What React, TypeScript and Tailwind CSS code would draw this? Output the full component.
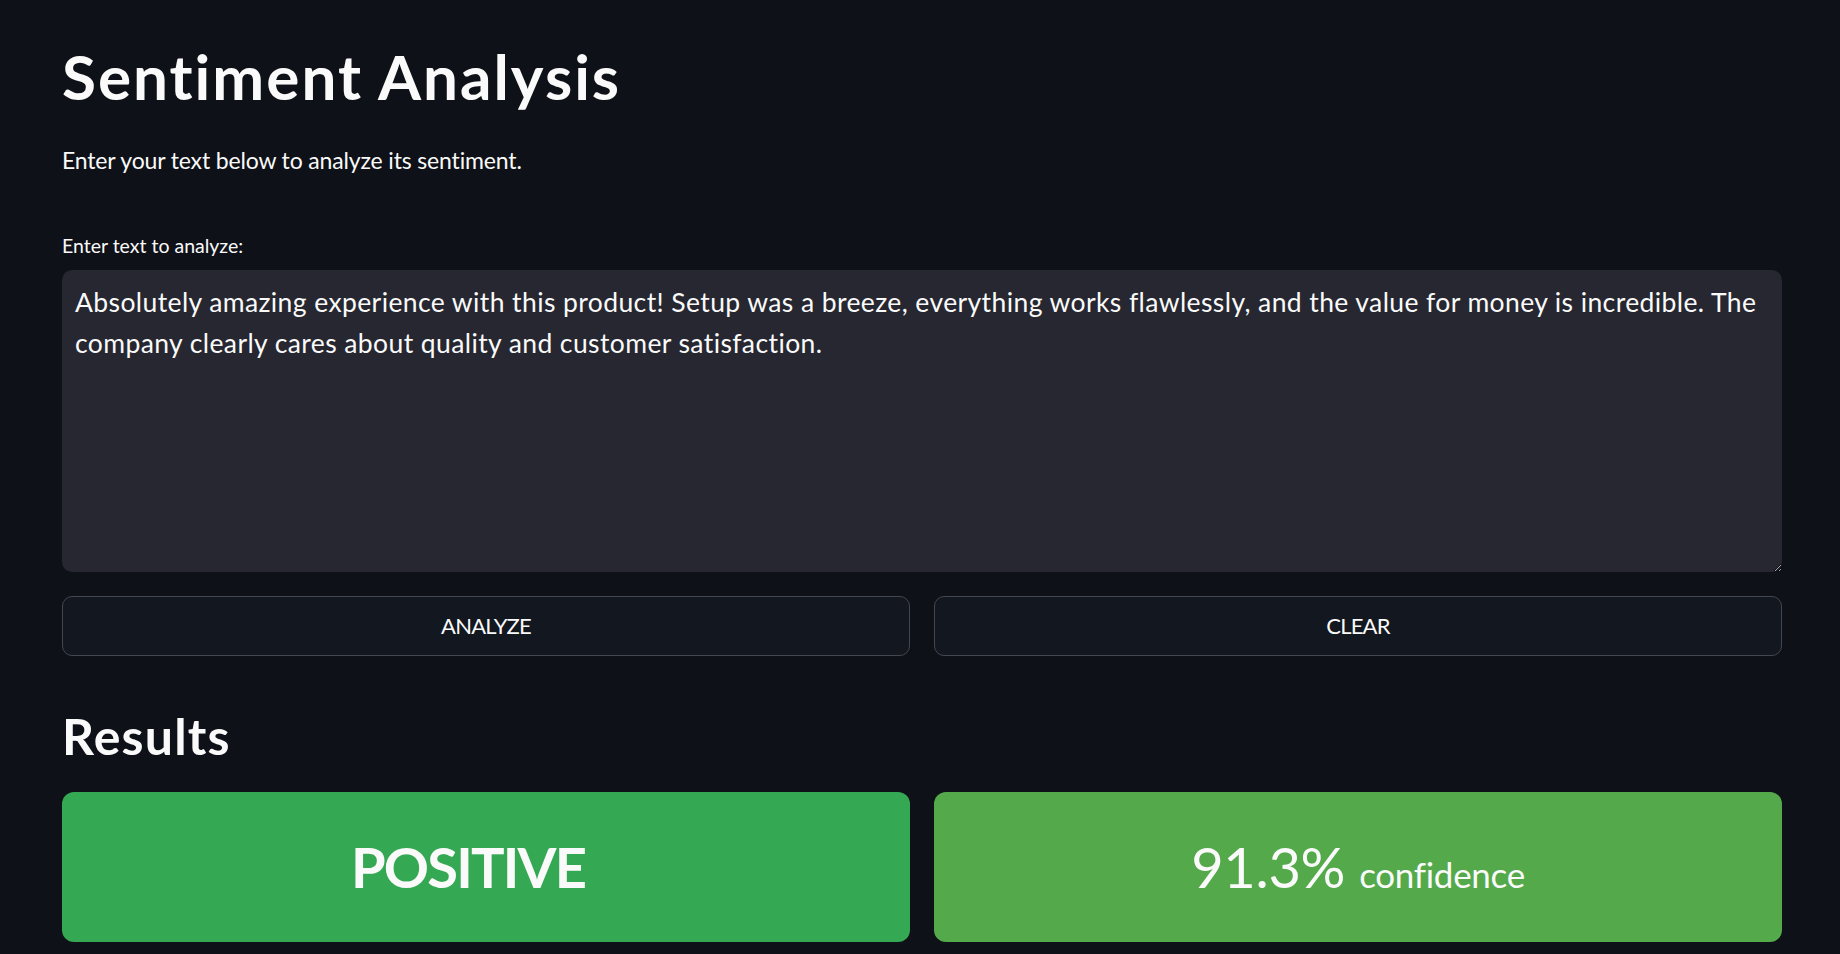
import { useState } from "react";

const SAMPLE =
  "Absolutely amazing experience with this product! Setup was a breeze, everything works flawlessly, and the value for money is incredible. The company clearly cares about quality and customer satisfaction.";

export default function App() {
  const [text, setText] = useState(SAMPLE);

  return (
    <div className="min-h-screen bg-[#0e1117] font-['Lato',sans-serif] text-[#fafafa]">
      <div className="pl-[62px] pr-[58px] pt-[40px]">
        {/* Header */}
        <h1 className="text-[62px] leading-[72px] font-bold tracking-[2px]">Sentiment Analysis</h1>
        <p className="mt-[31px] text-[23px] leading-[34px] tracking-[-0.15px]">
          Enter your text below to analyze its sentiment.
        </p>

        {/* Input */}
        <label className="mt-[57px] block text-[19.5px] leading-[24px]">
          Enter text to analyze:
        </label>
        <textarea
          value={text}
          onChange={e => setText(e.target.value)}
          className="mt-[12px] block h-[302px] w-full rounded-[10px] bg-[#262730] pl-[13px] pr-[13px] pt-[12px] text-[26.5px] leading-[41px] tracking-[0.4px] text-[#fafafa] outline-none [color-scheme:dark]"
        />

        {/* Actions */}
        <div className="mt-[24px] grid grid-cols-2 gap-[24px]">
          <button className="flex h-[60px] items-center justify-center rounded-[10px] border border-[#44474f] bg-[#131720] pb-[2px] text-[22px] tracking-[-0.8px]">
            ANALYZE
          </button>
          <button
            onClick={() => setText("")}
            className="flex h-[60px] items-center justify-center rounded-[10px] border border-[#44474f] bg-[#131720] pb-[2px] text-[22px] tracking-[-0.8px]"
          >
            CLEAR
          </button>
        </div>

        {/* Results */}
        <h2 className="mt-[50px] text-[50px] leading-[60px] font-bold tracking-[1.2px]">Results</h2>
        <div className="mt-[26px] grid grid-cols-2 gap-[24px]">
          <div className="flex h-[150px] items-center justify-center rounded-[12px] bg-[#34a853] pr-[36px]">
            <span className="text-[56px] font-bold leading-none tracking-[-1.8px]">POSITIVE</span>
          </div>
          <div className="flex h-[150px] items-center justify-center rounded-[12px] bg-[#54aa4b]">
            <span className="text-[56px] leading-none tracking-[-0.3px]">
              91.3% <span className="text-[35px]">confidence</span>
            </span>
          </div>
        </div>
      </div>
    </div>
  );
}
